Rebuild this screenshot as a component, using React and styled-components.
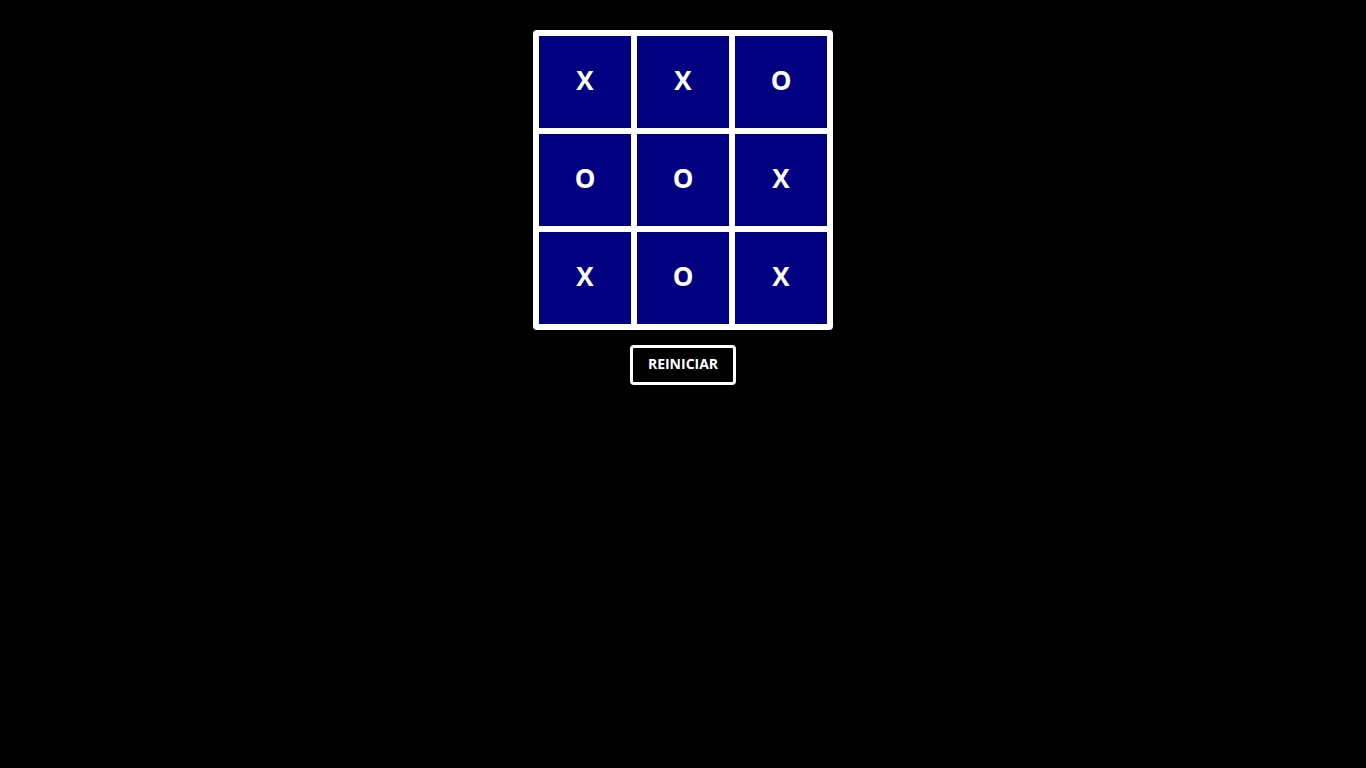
import React from "react";
import styled, { createGlobalStyle } from "styled-components";

const Global = createGlobalStyle`
  html, body { margin: 0; padding: 0; background: #000; }
  body { font-family: "Open Sans", "Noto Sans", sans-serif; min-height: 768px; }
`;

const Page = styled.main`
  display: flex;
  flex-direction: column;
  align-items: center;
  padding-top: 30px;
`;

const Board = styled.div`
  display: grid;
  grid-template-columns: repeat(3, 92px);
  grid-template-rows: repeat(3, 92px);
  gap: 6px;
  padding: 6px;
  background: #fff;
  border-radius: 4px;
`;

const Cell = styled.button`
  display: flex;
  align-items: center;
  justify-content: center;
  border: none;
  padding: 0 0 5px 0;
  margin: 0;
  background: #000080;
  color: #fff;
  font-family: "Open Sans", "Noto Sans", sans-serif;
  font-weight: 700;
  font-size: 26px;
  cursor: pointer;
`;

const Reset = styled.button`
  margin-top: 15px;
  width: 106px;
  height: 40px;
  padding: 0 0 3px 0;
  background: #000;
  color: #fff;
  border: 3px solid #fff;
  border-radius: 4px;
  font-family: "Open Sans", "Noto Sans", sans-serif;
  font-weight: 700;
  font-size: 14px;
  cursor: pointer;
`;

const cells = ["X", "X", "O", "O", "O", "X", "X", "O", "X"];

export default function App() {
  return (
    <>
      <Global />
      <Page>
        <Board>
          {cells.map((c, i) => (
            <Cell key={i}>{c}</Cell>
          ))}
        </Board>
        <Reset>REINICIAR</Reset>
      </Page>
    </>
  );
}
